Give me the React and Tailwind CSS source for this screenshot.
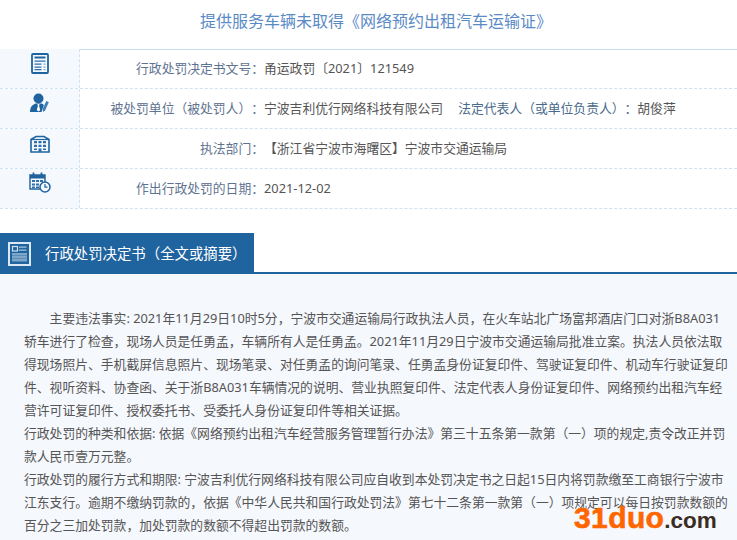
const rows = [
  { icon: <DocIcon />, label: '行政处罚决定书文号：', value: '甬运政罚〔2021〕121549', top: true },
  {
    icon: <PersonIcon />,
    label: '被处罚单位（被处罚人）：',
    value: (
      <>
        宁波吉利优行网络科技有限公司
        <span className="ml-[15px] text-[#4a6a8c]">法定代表人（或单位负责人）：</span>
        胡俊萍
      </>
    ),
  },
  { icon: <BuildingIcon />, label: '执法部门：', value: '【浙江省宁波市海曙区】宁波市交通运输局' },
  { icon: <CalendarIcon />, label: '作出行政处罚的日期：', value: '2021-12-02' },
]

function DocIcon() {
  return (
    <svg width="18" height="21" viewBox="0 0 18 21" fill="none">
      <rect x="1" y="1" width="16" height="19" rx="1" stroke="#1f639f" strokeWidth="1.8" />
      <path d="M3.500 3.500h11v2h-11z" fill="#1f639f" />
      <path d="M3.500 7.500h11v1.300h-11zM3.500 10.500h7v1.300h-7zM3.500 13.500h7v1.300h-7zM3.500 16h7v1.300h-7z" fill="#2f70aa" />
      <path d="M12.500 10.500h2v1.300h-2zM12.500 13.500h2v1.300h-2zM12.500 16h2v1.300h-2z" fill="#7ea8cc" />
    </svg>
  )
}

function PersonIcon() {
  return (
    <svg width="20" height="20" viewBox="0 0 20 20" fill="#1f639f">
      <circle cx="8.500" cy="5.500" r="5" />
      <path d="M0 19c0-4 1.500-7 5.500-8.500h6c1 .3 1.800.8 2.300 1.500L11.500 19z" />
      <path d="M7.500 11h2l-.4 2 1.100 4-1.700 1.500L6.800 17l1.100-4z" fill="#ffffff" />
      <path d="M16.300 8l2.500 1.200-3.600 8-2.200 1.800-.3-3z" fill="#3f7fb5" />
    </svg>
  )
}

function BuildingIcon() {
  return (
    <svg width="20" height="18" viewBox="0 0 20 18" className="mt-[2px]" fill="none">
      <path d="M1 4.500L6 1.500h8l5 3V17H1z" fill="#f5f9fe" stroke="#1f639f" strokeWidth="1.600" />
      <path d="M1 4.500h18" stroke="#1f639f" strokeWidth="1.200" />
      <path
        d="M4 6h3v2.300H4zM8.500 6h3v2.300h-3zM13 6h3v2.300h-3zM4 9.800h3v2.300H4zM8.500 9.800h3v2.300h-3zM13 9.800h3v2.300h-3zM8.500 13.500h3V17h-3zM4 13.500h3V15H4zM13 13.500h3V15h-3z"
        fill="#2f70aa"
      />
    </svg>
  )
}

function CalendarIcon() {
  return (
    <svg width="22" height="21" viewBox="0 0 22 21" className="-mt-[1px]" fill="none">
      <path d="M1 3h15v14H1z" fill="#f5f9fe" stroke="#1f639f" strokeWidth="1.400" />
      <path d="M1 3h15v3.500H1z" fill="#1f639f" />
      <path d="M4.500 0.500v4M12.500 0.500v4" stroke="#1f639f" strokeWidth="1.800" />
      <path d="M3 8h3v2H3zM7 8h3v2H7zM11 8h3v2h-3zM3 11.500h3v2H3zM7 11.500h3v2H7zM3 14.500h3v1.500H3zM7 14.500h3v1.500H7z" fill="#2f70aa" />
      <circle cx="16" cy="15" r="5" fill="#f5f9fe" stroke="#1f639f" strokeWidth="1.500" />
      <path d="M16 12v3.200h2.500" stroke="#1f639f" strokeWidth="1.200" />
    </svg>
  )
}

export default function App() {
  return (
    <div
      className="relative h-[540px] w-[737px] overflow-hidden bg-white text-[12.8px] text-[#555] [text-spacing-trim:space-all]"
      style={{ fontFamily: '"Noto Sans", "Noto Sans CJK SC", sans-serif' }}
    >
      <h1 className="flex h-[49px] items-center justify-center pb-[8px] pl-[15px] text-[16px] font-normal text-[#5a8ac6]">
        提供服务车辆未取得《网络预约出租汽车运输证》
      </h1>

      <div className="flex flex-col">
        {rows.map((row, i) => (
          <div key={i} className="flex h-[40px] border-b border-dashed border-[#cfe2f3]">
            <div className="flex w-[80px] justify-center border-r border-dashed border-[#cfe2f3] bg-[#f5f9fe] pt-[4px]">
              {row.icon}
            </div>
            <div className={`flex flex-1 items-center ${row.top ? 'border-t border-solid border-[#c9dcec]' : ''}`}>
              <div className="w-[184px] whitespace-nowrap text-right text-[#5f7391]">{row.label}</div>
              <div className="whitespace-nowrap">{row.value}</div>
            </div>
          </div>
        ))}
      </div>

      <div className="mt-[24px] flex h-[41px] border-b-2 border-[#1f639f]">
        <div className="flex h-[41px] w-[254px] items-center gap-[14px] bg-[#1f639f] pl-[8px] text-[14.4px] text-white">
          <svg width="23" height="24" viewBox="0 0 23 24" fill="none">
            <rect x="1" y="1" width="21" height="22" fill="#1f639f" stroke="#dbe7f2" strokeWidth="2" />
            <rect x="4.500" y="4.500" width="5" height="4.500" fill="#1f639f" stroke="#cfe0ee" strokeWidth="1.200" />
            <path d="M11 4.500h7.500v1.200H11zM11 7.500h7.500v1.200H11z" fill="#a9c4dc" />
            <path d="M4 11h15v8.500H4z" fill="#7ea6c9" />
            <path d="M4 13.500h15M4 16.500h15" stroke="#4f86b6" strokeWidth="0.800" />
          </svg>
          <span className="whitespace-nowrap">行政处罚决定书（全文或摘要）</span>
        </div>
      </div>

      <div className="h-[300px] bg-[#f5f8fd] pl-[24px] pr-[6px] pt-[33px] leading-[23.04px]">
        <p className="indent-[25.6px]">
          主要违法事实: 2021年11月29日10时5分，宁波市交通运输局行政执法人员，在火车站北广场富邦酒店门口对浙B8A031轿车进行了检查，现场人员是任勇孟，车辆所有人是任勇孟。2021年11月29日宁波市交通运输局批准立案。执法人员依法取得现场照片、手机截屏信息照片、现场笔录、对任勇孟的询问笔录、任勇孟身份证复印件、驾驶证复印件、机动车行驶证复印件、视听资料、协查函、关于浙B8A031车辆情况的说明、营业执照复印件、法定代表人身份证复印件、网络预约出租汽车经营许可证复印件、授权委托书、受委托人身份证复印件等相关证据。
        </p>
        <p>
          行政处罚的种类和依据: 依据《网络预约出租汽车经营服务管理暂行办法》第三十五条第一款第（一）项的规定,责令改正并罚款人民币壹万元整。
        </p>
        <p>
          行政处罚的履行方式和期限: 宁波吉利优行网络科技有限公司应自收到本处罚决定书之日起15日内将罚款缴至工商银行宁波市江东支行。逾期不缴纳罚款的，依据《中华人民共和国行政处罚法》第七十二条第一款第（一）项规定可以每日按罚款数额的百分之三加处罚款，加处罚款的数额不得超出罚款的数额。
        </p>
      </div>

      <div
        className="absolute left-[574px] top-[503px] flex items-baseline whitespace-nowrap leading-none"
        style={{ fontFamily: '"Liberation Sans", sans-serif' }}
      >
        <span className="text-[30px] font-bold tracking-[0.4px] text-[#ff6600] [-webkit-text-stroke:0.6px_#ff6600]">
          31duo
        </span>
        <span className="text-[22.5px] font-bold text-[#3a2c22]">.com</span>
      </div>
    </div>
  )
}
